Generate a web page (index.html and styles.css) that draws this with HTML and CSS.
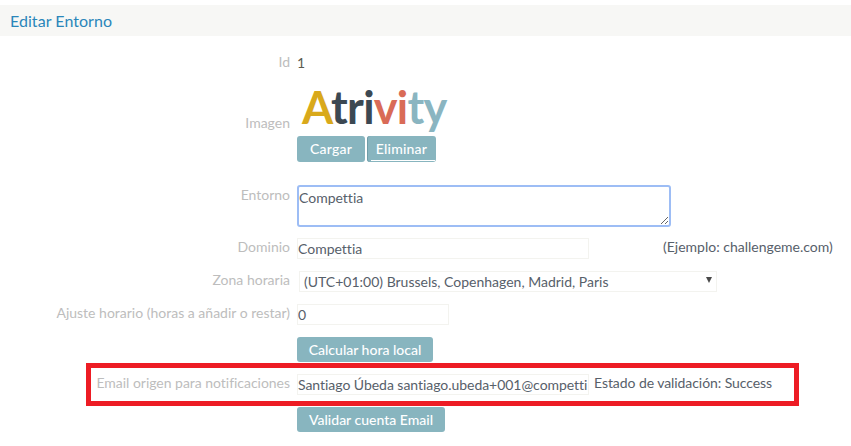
FILE: index.html
```html
<!DOCTYPE html>
<html lang="es">
<head>
<meta charset="utf-8">
<title>Editar Entorno</title>
<link rel="stylesheet" href="styles.css">
</head>
<body>
<h1 class="title">Editar Entorno</h1>
<form class="form">
  <div class="row row-id">
    <label class="label">Id</label>
    <div class="value id-value">1</div>
  </div>
  <div class="row row-image">
    <label class="label image-label">Imagen</label>
    <div class="value">
      <div class="logo"><span class="l-a">A</span><span class="l-d">tri</span><span class="l-r">vi</span><span class="l-b">ty</span></div>
      <div class="buttons">
        <button type="button" class="btn btn-upload">Cargar</button>
        <button type="button" class="btn btn-focus">Eliminar</button>
      </div>
    </div>
  </div>
  <div class="row row-env">
    <label class="label label-env">Entorno</label>
    <textarea class="textarea">Compettia</textarea>
  </div>
  <div class="row row-domain">
    <label class="label">Dominio</label>
    <input class="input input-wide" value="Compettia">
    <span class="hint">(Ejemplo: challengeme.com)</span>
  </div>
  <div class="row row-zone">
    <label class="label">Zona horaria</label>
    <div class="select"><span>(UTC+01:00) Brussels, Copenhagen, Madrid, Paris</span><span class="arrow"></span></div>
  </div>
  <div class="row row-offset">
    <label class="label">Ajuste horario (horas a añadir o restar)</label>
    <input class="input input-short" value="0">
  </div>
  <div class="row row-calc">
    <span class="label"></span>
    <button type="button" class="btn btn-calc">Calcular hora local</button>
  </div>
  <div class="row row-email">
    <label class="label label-email">Email origen para notificaciones</label>
    <input class="input input-wide input-email" value="Santiago Úbeda santiago.ubeda+001@compettia.com">
    <span class="status">Estado de validación: Success</span>
  </div>
  <div class="row row-validate">
    <span class="label"></span>
    <button type="button" class="btn btn-validate">Validar cuenta Email</button>
  </div>
</form>
<div class="highlight"></div>
</body>
</html>
```
FILE: styles.css
```css
* { box-sizing: border-box; }
html, body { margin: 0; padding: 0; background: #fff; }
body {
  position: relative;
  width: 851px;
  height: 446px;
  overflow: hidden;
  padding-top: 5px;
  font-family: Lato, "Liberation Sans", sans-serif;
  font-size: 14px;
  font-variant-ligatures: none;
  color: #57606a;
}
.title {
  margin: 0;
  height: 31px;
  padding-left: 10px;
  background: #f7f7f5;
  font-size: 16px;
  font-weight: 400;
  line-height: 32px;
  letter-spacing: 0.05px;
  color: #2a86ba;
}
.row { display: flex; align-items: center; }
.label {
  flex: none;
  width: 290px;
  margin-right: 7px;
  text-align: right;
  color: #bdbdbd;
  line-height: 20px;
}
.label-email { letter-spacing: -0.03px; }
.row-id { margin-top: 16px; height: 20px; }
.id-value { color: #5b5b4f; }
.row-image { margin-top: 14px; align-items: flex-start; }
.image-label { margin-top: 27px; }
.logo {
  height: 50px;
  padding-left: 5px;
  font-size: 45px;
  font-weight: 700;
  line-height: 42px;
  letter-spacing: -0.75px;
  white-space: nowrap;
}
.l-a { color: #d9a91b; }
.l-d { color: #3c4852; }
.l-r { color: #d96b57; }
.l-b { color: #8ab5c1; }
.buttons { display: flex; gap: 2px; }
.btn {
  display: block;
  height: 26px;
  padding: 0;
  border: 0;
  border-radius: 3px;
  background: #88b5bf;
  color: #fff;
  font-family: inherit;
  font-size: 14px;
  font-variant-ligatures: none;
  font-weight: 500;
  line-height: 26px;
  text-align: center;
}
.btn-upload { width: 68px; letter-spacing: 0.2px; }
.btn-focus {
  position: relative;
  width: 69px;
  letter-spacing: 0.2px;
  box-shadow: inset 1px 0 0 #6f9ca7;
}
.btn-focus::after {
  content: "";
  position: absolute;
  left: 4px;
  right: 1px;
  bottom: 1px;
  height: 1px;
  background: #fff;
}
.btn-calc { width: 136px; height: 25px; }
.btn-validate { width: 148px; height: 25px; }
.row-env { margin-top: 23px; align-items: flex-start; }
.label-env { margin-top: 0; }
.textarea {
  display: block;
  width: 374px;
  height: 42px;
  padding: 1px 0;
  border: 2px solid #9dbdf5;
  border-radius: 3px;
  outline: 0;
  font-family: inherit;
  font-size: 14px;
  font-variant-ligatures: none;
  line-height: 20px;
  color: #57606a;
  background: #fff;
}
.input {
  display: block;
  height: 21px;
  padding: 0 0 1px 0;
  border: 1px solid #f3f3ef;
  outline: 0;
  background: #fff;
  font-family: inherit;
  font-size: 14px;
  font-variant-ligatures: none;
  color: #57606a;
}
.input-email { letter-spacing: -0.04px; padding-right: 1px; }
.input-wide { width: 292px; }
.input-short { width: 152px; }
.row-domain { margin-top: 11px; height: 21px; }
.row-domain .label, .row-zone .label, .row-offset .label, .row-email .label { position: relative; top: -2px; }
.hint { margin-left: 74px; color: #57606a; position: relative; top: -2px; }
.row-zone { margin-top: 12px; height: 21px; }
.select {
  display: flex;
  justify-content: space-between;
  align-items: center;
  width: 418px;
  height: 21px;
  margin-left: 2px;
  padding: 0 4px 0 4px;
  border: 1px solid #f3f3ef;
  background: #fff;
}
.arrow {
  width: 0;
  height: 0;
  margin-right: 0;
  margin-top: -3px;
  border-left: 3.5px solid transparent;
  border-right: 3.5px solid transparent;
  border-top: 6px solid #4a4a4a;
}
.row-offset { margin-top: 12px; height: 21px; }
.row-calc { margin-top: 12px; }
.row-email { margin-top: 12px; height: 21px; }
.status { margin-left: 5px; position: relative; top: -2px; letter-spacing: -0.07px; }
.row-validate { margin-top: 12px; }
.highlight {
  position: absolute;
  left: 86px;
  top: 363px;
  width: 713px;
  height: 43px;
  border: 5px solid #ed1c24;
  pointer-events: none;
}
```
